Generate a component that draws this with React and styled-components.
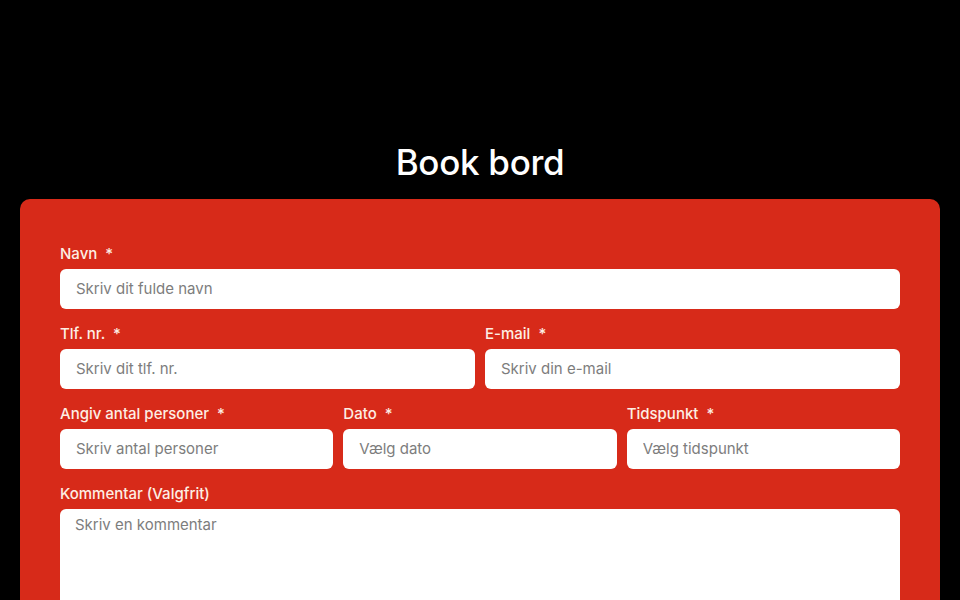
import React from "react";
import styled, { createGlobalStyle } from "styled-components";

const Global = createGlobalStyle`
  html, body {
    margin: 0;
    background: #000;
    font-family: Inter, "Noto Sans", sans-serif;
  }
  * { box-sizing: border-box; }
`;

const Page = styled.div`
  padding: 140px 20px 0;
  display: flex;
  flex-direction: column;
  align-items: center;
`;

const Title = styled.h1`
  margin: 0 0 15px;
  color: #fff;
  font-size: 35px;
  font-weight: 500;
  line-height: 44px;
  letter-spacing: -0.3px;
`;

const Card = styled.form`
  width: 100%;
  background: #d72a19;
  border-radius: 10px;
  padding: 44px 40px 40px;
  display: flex;
  flex-direction: column;
  gap: 14px;
`;

const Row = styled.div`
  display: grid;
  grid-template-columns: repeat(${(p) => p.cols || 1}, 1fr);
  gap: 10px;
`;

const Field = styled.label`
  display: flex;
  flex-direction: column;
  gap: 5px;
`;

const Label = styled.span`
  color: #fdeee4;
  font-size: 15px;
  font-weight: 500;
  line-height: 20px;
  padding-top: 1px;
  white-space: pre;
`;

const Input = styled.input`
  height: 40px;
  border: none;
  border-radius: 6px;
  background: #fff;
  padding: 0 16px 2px;
  font: inherit;
  font-size: 15px;
  color: #222;
  outline: none;
  &::placeholder { color: #7d7d7d; }
`;

const TextArea = styled.textarea`
  height: 120px;
  border: none;
  border-radius: 6px;
  background: #fff;
  padding: 6px 15px;
  font: inherit;
  font-size: 15px;
  line-height: 20px;
  outline: none;
  resize: vertical;
  &::placeholder { color: #7d7d7d; }
`;

const F = ({ label, required, placeholder }) => (
  <Field>
    <Label>{required ? `${label}  *` : label}</Label>
    <Input placeholder={placeholder} />
  </Field>
);

export default function App() {
  return (
    <>
      <Global />
      <Page>
        <Title>Book bord</Title>
        <Card>
          <Row>
            <F label="Navn" required placeholder="Skriv dit fulde navn" />
          </Row>
          <Row cols={2}>
            <F label="Tlf. nr." required placeholder="Skriv dit tlf. nr." />
            <F label="E-mail" required placeholder="Skriv din e-mail" />
          </Row>
          <Row cols={3}>
            <F label="Angiv antal personer" required placeholder="Skriv antal personer" />
            <F label="Dato" required placeholder="Vælg dato" />
            <F label="Tidspunkt" required placeholder="Vælg tidspunkt" />
          </Row>
          <Field>
            <Label>Kommentar (Valgfrit)</Label>
            <TextArea placeholder="Skriv en kommentar" />
          </Field>
        </Card>
      </Page>
    </>
  );
}
